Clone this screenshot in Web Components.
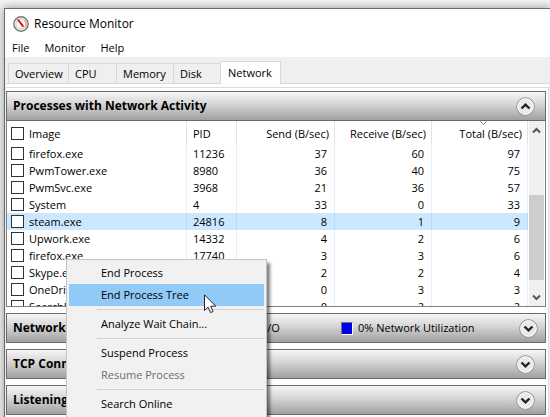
<!DOCTYPE html>
<html lang="en">
<head>
<meta charset="utf-8">
<title>Resource Monitor</title>
<style>
html, body {
    height: 100%;
}
body {
    margin: 0;
    overflow: hidden;
    background: #f6f6f6;
    color: #000;
    font: 11px/16px "Open Sans", "Noto Sans", sans-serif;
}
</style>
</head>
<body>
<monitor-window caption="Resource Monitor">
    <menu-bar slot="menu" items="File,Monitor,Help"></menu-bar>
    <tab-strip slot="tabs">
        <tab-item style="--width: 60px">Overview</tab-item>
        <tab-item style="--width: 48px">CPU</tab-item>
        <tab-item style="--width: 57px">Memory</tab-item>
        <tab-item style="--width: 47px">Disk</tab-item>
        <tab-item style="--width: 61px" selected>Network</tab-item>
    </tab-strip>
    <monitor-section caption="Processes with Network Activity" open>
        <process-table></process-table>
    </monitor-section>
    <monitor-section caption="Network Activity">
        <usage-legend slot="legend" color="#00c000">0 Kbps Network I/O</usage-legend>
        <usage-legend slot="legend" color="#0000f0">0% Network Utilization</usage-legend>
    </monitor-section>
    <monitor-section caption="TCP Connections"></monitor-section>
    <monitor-section caption="Listening Ports"></monitor-section>
</monitor-window>
<context-menu></context-menu>
<mouse-pointer></mouse-pointer>

<script>
function attach(element, html) {
    const template = document.createElement('template');
    template.innerHTML = html;
    element.attachShadow({ mode: 'open' });
    element.shadowRoot.appendChild(template.content.cloneNode(true));
}

class MonitorWindow extends HTMLElement {
    constructor() {
        super();
        attach(this, `
<style>
:host {
    display: block;
    box-sizing: border-box;
    min-height: 100%;
    padding: 8px 0 0 4px;
}
.window {
    display: flex;
    flex-direction: column;
    min-height: 100vh;
    border: solid #6b6b6b;
    border-width: 1px 0 0 1px;
    background: #efefef;
    box-shadow: 0 0 9px 1px rgba(0, 0, 0, .35);
}
header {
    display: flex;
    align-items: center;
    gap: 5px;
    height: 30px;
    padding-left: 8px;
    background: #fff;
}
h1 {
    margin: 0;
    font-size: 12px;
    font-weight: normal;
}
main {
    display: flex;
    flex-direction: column;
    flex: 1;
    gap: 6px;
    margin: 0 1px;
    padding: 3px 2px 0 0;
    background: #fff;
    border-right: 1px solid #dcdcdc;
}
</style>
<div class="window">
    <header>
        <svg width="16" height="16" viewBox="0 0 16 16" aria-hidden="true">
            <circle cx="8" cy="8" r="7.2" fill="#f4f4f0" stroke="#777" stroke-width="1.4"/>
            <circle cx="8" cy="8" r="5" fill="#fff" stroke="#c9c5b8"/>
            <path d="M11.5 4.5a5 5 0 0 1 .6 6.6" fill="none" stroke="#e79a70" stroke-width="1.2"/>
            <path d="M3.8 3.6L6 3.5l4.3 5.3.7 2.8-2.2-1z" fill="#d9160f"/>
        </svg>
        <h1></h1>
    </header>
    <slot name="menu"></slot>
    <slot name="tabs"></slot>
    <main><slot></slot></main>
</div>
`);
        this.shadowRoot.querySelector('h1').textContent = this.getAttribute('caption');
    }
}

class MenuBar extends HTMLElement {
    constructor() {
        super();
        attach(this, `
<style>
:host {
    display: block;
    background: #fff;
}
nav {
    display: flex;
    height: 18px;
    gap: 15px;
    padding-left: 7px;
}
button {
    padding: 0;
    border: 0;
    background: none;
    color: inherit;
    font: inherit;
}
</style>
<nav></nav>
`);
        const nav = this.shadowRoot.querySelector('nav');
        for (const item of this.getAttribute('items').split(',')) {
            const button = document.createElement('button');
            button.textContent = item;
            nav.appendChild(button);
        }
    }
}

class TabStrip extends HTMLElement {
    constructor() {
        super();
        attach(this, `
<style>
:host {
    display: block;
    margin: 0 1px;
    background: #fff;
    border-bottom: 1px solid #dcdcdc;
}
div {
    display: flex;
    align-items: flex-end;
    height: 27px;
    padding-left: 2px;
    margin-bottom: 3px;
    background: #efefef;
    box-shadow: inset 0 -1px #d9d9d9;
}
</style>
<div role="tablist"><slot></slot></div>
`);
    }
}

class TabItem extends HTMLElement {
    constructor() {
        super();
        attach(this, `
<style>
:host {
    display: block;
    width: var(--width);
}
button {
    display: block;
    width: 100%;
    height: 21px;
    padding: 0 6px;
    border: solid #d9d9d9;
    border-width: 1px 0 1px 1px;
    background: #efefef;
    color: inherit;
    font: inherit;
    text-align: left;
}
:host([selected]) button {
    height: 23px;
    padding: 0 7px 1px;
    border-width: 1px 1px 0;
    background: #fff;
}
</style>
<button role="tab"><slot></slot></button>
`);
        this.shadowRoot.querySelector('button').setAttribute('aria-selected', this.hasAttribute('selected'));
    }
}

class MonitorSection extends HTMLElement {
    constructor() {
        super();
        attach(this, `
<style>
:host {
    display: block;
}
header {
    display: flex;
    align-items: center;
    box-sizing: border-box;
    height: 30px;
    padding: 0 10px 0 6px;
    border: 1px solid #6a6a6a;
    background: linear-gradient(#f6f6f6, #d4d4d4 45%, #a0a0a0);
}
h2 {
    flex: none;
    min-width: 150px;
    margin: 0;
    font-size: 12px;
    font-weight: bold;
    white-space: nowrap;
}
.legend {
    display: flex;
    flex: 1;
}
button {
    display: flex;
    padding: 0;
    border: 0;
    background: none;
}
:host([open]) svg path {
    transform: rotate(180deg);
    transform-origin: center;
}
.content {
    border: solid #808080;
    border-width: 0 1px 1px;
}
:host(:not([open])) .content {
    display: none;
}
</style>
<header>
    <h2></h2>
    <div class="legend"><slot name="legend"></slot></div>
    <button aria-label="Toggle section">
        <svg width="19" height="19" viewBox="0 0 19 19">
            <circle cx="9.5" cy="9.5" r="8.8" fill="#e9e9e9" stroke="#8a8a8a"/>
            <circle cx="9.5" cy="9.5" r="7.8" fill="none" stroke="#fafafa"/>
            <path d="M5.5 7.5l4 3.8 4-3.8" fill="none" stroke="#222" stroke-width="2.4"/>
        </svg>
    </button>
</header>
<div class="content"><slot></slot></div>
`);
        this.shadowRoot.querySelector('h2').textContent = this.getAttribute('caption');
    }
}

class UsageLegend extends HTMLElement {
    constructor() {
        super();
        attach(this, `
<style>
:host {
    display: flex;
    flex: none;
    align-items: center;
    gap: 5px;
    width: 178px;
    white-space: nowrap;
}
i {
    flex: none;
    box-sizing: border-box;
    width: 12px;
    height: 13px;
    border: 1px solid;
    border-color: #777 #fff #fff #777;
}
</style>
<i></i><span><slot></slot></span>
`);
        this.shadowRoot.querySelector('i').style.backgroundColor = this.getAttribute('color');
    }
}

const processes = [
    ['firefox.exe', 11236, 37, 60, 97],
    ['PwmTower.exe', 8980, 36, 40, 75],
    ['PwmSvc.exe', 3968, 21, 36, 57],
    ['System', 4, 33, 0, 33],
    ['steam.exe', 24816, 8, 1, 9],
    ['Upwork.exe', 14332, 4, 2, 6],
    ['firefox.exe', 17740, 3, 3, 6],
    ['Skype.exe', 13208, 2, 2, 4],
    ['OneDrive.exe', 9144, 0, 3, 3],
    ['SearchUI.exe', 10456, 0, 2, 2]
];

class ProcessTable extends HTMLElement {
    constructor() {
        super();
        attach(this, `
<style>
:host {
    display: flex;
    height: 185px;
    overflow: hidden;
    background: #fff;
}
.list {
    flex: 1;
    min-width: 0;
}
table {
    width: 100%;
    border-collapse: separate;
    border-spacing: 0;
    table-layout: fixed;
}
.image { width: 180px; }
.pid { width: 50px; }
.send { width: 98px; }
.receive { width: 97px; }
th, td {
    box-sizing: border-box;
    height: 17px;
    padding: 0 7px 0 0;
    border-right: 1px solid #e5f0fb;
    font-weight: normal;
    line-height: 17px;
    text-align: right;
    white-space: nowrap;
}
th {
    position: relative;
    height: 24px;
    padding: 0 5px 0 0;
    border-color: #e2e2e2;
}
th:first-child, td:first-child {
    padding-left: 4px;
    text-align: left;
}
th:nth-child(2), td:nth-child(2) {
    padding-left: 6px;
    text-align: left;
}
tr.selected td {
    background: #cce8ff;
    border-color: #b9dcf7;
}
label {
    display: flex;
    align-items: center;
    gap: 5px;
}
input {
    appearance: none;
    flex: none;
    box-sizing: border-box;
    width: 13px;
    height: 13px;
    margin: 0;
    border: 1px solid #333;
    background: #fff;
}
.sorted svg {
    position: absolute;
    left: 50%;
    top: 0;
}
.scrollbar {
    display: flex;
    flex-direction: column;
    flex: none;
    width: 15px;
    margin: 0 1px;
    background: #f0f0f0;
}
.scrollbar button {
    display: flex;
    align-items: center;
    justify-content: center;
    height: 18px;
    padding: 0;
    border: 0;
    background: none;
}
.before { flex: 56; }
.thumb { flex: 85; background: #cdcdcd; }
.after { flex: 8; }
</style>
<div class="list">
    <table>
        <colgroup><col class="image"><col class="pid"><col class="send"><col class="receive"><col></colgroup>
        <thead>
            <tr>
                <th><label><input type="checkbox">Image</label></th>
                <th>PID</th>
                <th>Send (B/sec)</th>
                <th>Receive (B/sec)</th>
                <th class="sorted">Total (B/sec)<svg width="7" height="5" viewBox="0 0 7 5"><path d="M.5 .5l3 3 3-3" fill="none" stroke="#777"/></svg></th>
            </tr>
        </thead>
        <tbody></tbody>
    </table>
</div>
<div class="scrollbar">
    <button aria-label="Scroll up"><svg width="9" height="7" viewBox="0 0 9 7"><path d="M1 5.5L4.5 2 8 5.5" fill="none" stroke="#555" stroke-width="2"/></svg></button>
    <div class="before"></div>
    <div class="thumb"></div>
    <div class="after"></div>
    <button aria-label="Scroll down"><svg width="9" height="7" viewBox="0 0 9 7"><path d="M1 1.5L4.5 5 8 1.5" fill="none" stroke="#555" stroke-width="2"/></svg></button>
</div>
`);
        const body = this.shadowRoot.querySelector('tbody');
        for (const [image, ...values] of processes) {
            const row = body.insertRow();
            row.className = image === 'steam.exe' ? 'selected' : '';
            row.insertCell().innerHTML = `<label><input type="checkbox">${image}</label>`;
            for (const value of values) {
                row.insertCell().textContent = value;
            }
        }
    }
}

class ContextMenu extends HTMLElement {
    constructor() {
        super();
        attach(this, `
<style>
:host {
    position: absolute;
    left: 66px;
    top: 259px;
    box-sizing: border-box;
    width: 201px;
    padding: 2px;
    border: 1px solid #c4c4c4;
    background: #f1f1f1;
    box-shadow: 3px 4px 3px rgba(0, 0, 0, .5);
}
button {
    display: block;
    width: 100%;
    height: 22px;
    padding: 0 0 0 32px;
    border: 0;
    background: none;
    color: inherit;
    font: inherit;
    text-align: left;
}
button.active {
    background: #91c9f7;
}
button:disabled {
    color: #6d6d6d;
}
hr {
    height: 1px;
    margin: 3px 0 3px 28px;
    border: 0;
    background: #d2d2d2;
}
</style>
<div role="menu">
    <button role="menuitem">End Process</button>
    <button role="menuitem" class="active">End Process Tree</button>
    <hr>
    <button role="menuitem">Analyze Wait Chain...</button>
    <hr>
    <button role="menuitem">Suspend Process</button>
    <button role="menuitem" disabled>Resume Process</button>
    <hr>
    <button role="menuitem">Search Online</button>
</div>
`);
    }
}

class MousePointer extends HTMLElement {
    constructor() {
        super();
        attach(this, `
<style>
:host {
    position: absolute;
    left: 204px;
    top: 294px;
    pointer-events: none;
}
svg { display: block; }
</style>
<svg width="13" height="20" viewBox="0 0 13 20">
    <path d="M.5 .8v15.7l3.6-3.4 2.5 5.5 2.500-1.100-2.400-5.300h5.100z" fill="#fff" stroke="#223" stroke-width="1"/>
</svg>
`);
    }
}

window.customElements.define('monitor-window', MonitorWindow)
window.customElements.define('menu-bar', MenuBar)
window.customElements.define('tab-strip', TabStrip)
window.customElements.define('tab-item', TabItem)
window.customElements.define('monitor-section', MonitorSection)
window.customElements.define('usage-legend', UsageLegend)
window.customElements.define('process-table', ProcessTable)
window.customElements.define('context-menu', ContextMenu)
window.customElements.define('mouse-pointer', MousePointer)
</script>
</body>
</html>
